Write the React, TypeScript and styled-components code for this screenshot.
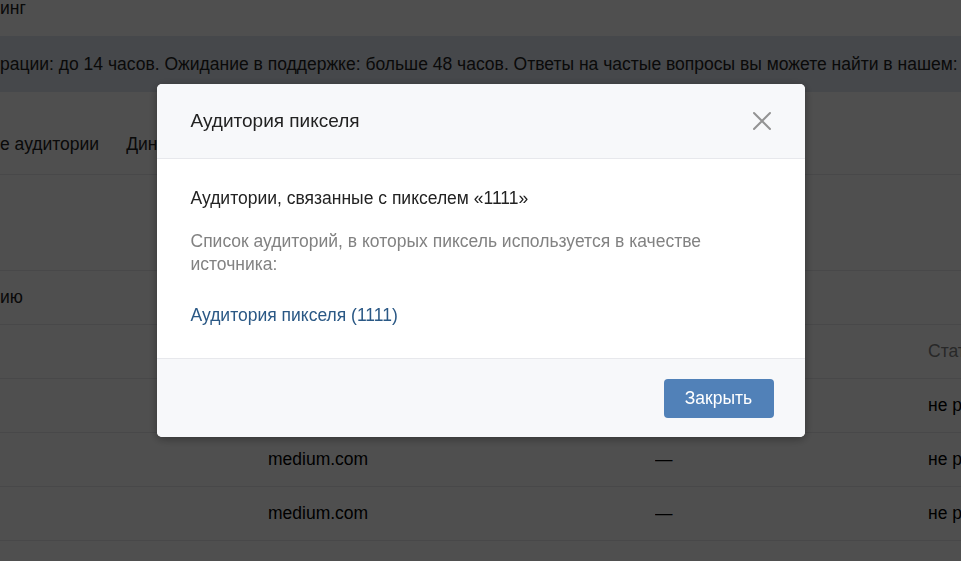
import React from "react";
import styled, { createGlobalStyle } from "styled-components";

const GlobalStyle = createGlobalStyle`
  html, body {
    margin: 0;
    padding: 0;
    background: #ffffff;
    overflow: hidden;
  }
  body {
    font-family: "Liberation Sans", Arial, sans-serif;
    color: #000000;
  }
`;

const rows = [
  { domain: "", source: "—", status: "не р" },
  { domain: "medium.com", source: "—", status: "не р" },
  { domain: "medium.com", source: "—", status: "не р" },
  { domain: "", source: "", status: "" },
];

const App: React.FC = () => {
  return (
    <>
      <GlobalStyle />
      <StyledPage>
        <StyledCrumb>инг</StyledCrumb>
        <StyledNotice>
          рации: до 14 часов. Ожидание в поддержке: больше 48 часов. Ответы на частые вопросы вы можете найти в нашем:
        </StyledNotice>
        <StyledTabs>
          <StyledTab>е аудитории</StyledTab>
          <StyledTab>Динамические аудитории</StyledTab>
        </StyledTabs>
        <StyledBlank />
        <StyledSubhead>ию</StyledSubhead>
        <StyledTable>
          <StyledRow>
            <StyledCell />
            <StyledCell />
            <StyledCell />
            <StyledCell muted>Статус</StyledCell>
          </StyledRow>
          {rows.map((r, i) => (
            <StyledRow key={i}>
              <StyledCell />
              <StyledCell>{r.domain}</StyledCell>
              <StyledCell>{r.source}</StyledCell>
              <StyledCell>{r.status}</StyledCell>
            </StyledRow>
          ))}
        </StyledTable>
      </StyledPage>

      <StyledOverlay>
        <StyledModal>
          <StyledModalHeader>
            <StyledModalTitle>Аудитория пикселя</StyledModalTitle>
            <StyledClose aria-label="Закрыть">
              <svg width="20" height="20" viewBox="0 0 20 20">
                <path
                  d="M2 2 L18 18 M18 2 L2 18"
                  stroke="#939393"
                  strokeWidth="2"
                  strokeLinecap="round"
                  fill="none"
                />
              </svg>
            </StyledClose>
          </StyledModalHeader>
          <StyledModalBody>
            <StyledLead>Аудитории, связанные с пикселем «1111»</StyledLead>
            <StyledHint>
              Список аудиторий, в которых пиксель используется в качестве
              источника:
            </StyledHint>
            <StyledLink href="#">Аудитория пикселя (1111)</StyledLink>
          </StyledModalBody>
          <StyledModalFooter>
            <StyledButton>Закрыть</StyledButton>
          </StyledModalFooter>
        </StyledModal>
      </StyledOverlay>
    </>
  );
};

const StyledPage = styled.div`
  width: 961px;
  height: 561px;
  overflow: hidden;
  display: flex;
  flex-direction: column;
  font-size: 17.5px;
  color: #000;
  & > * {
    flex-shrink: 0;
  }
`;

const StyledCrumb = styled.div`
  height: 36px;
  line-height: 16px;
  color: #222;
`;

const StyledNotice = styled.div`
  height: 56px;
  display: flex;
  align-items: center;
  background: #e2e8f0;
  color: #222;
  white-space: nowrap;
  overflow: hidden;
`;

const StyledTabs = styled.div`
  height: 83px;
  box-sizing: border-box;
  display: flex;
  align-items: flex-end;
  gap: 27px;
  padding-bottom: 19px;
  border-bottom: 1px solid #e7e8ec;
  white-space: nowrap;
  color: #222;
`;

const StyledTab = styled.div``;

const StyledBlank = styled.div`
  height: 95px;
  border-bottom: 1px solid #e7e8ec;
`;

const StyledSubhead = styled.div`
  height: 54px;
  box-sizing: border-box;
  display: flex;
  align-items: center;
  border-bottom: 1px solid #e7e8ec;
  color: #222;
`;

const StyledTable = styled.div`
  display: flex;
  flex-direction: column;
`;

const StyledRow = styled.div`
  height: 54px;
  box-sizing: border-box;
  display: grid;
  grid-template-columns: 268px 387px 273px 1fr;
  align-items: center;
  border-bottom: 1px solid #e7e8ec;
  white-space: nowrap;
`;

const StyledCell = styled.div<{ muted?: boolean }>`
  color: ${({ muted }) => (muted ? "#828282" : "#000")};
  overflow: hidden;
`;

const StyledOverlay = styled.div`
  position: fixed;
  inset: 0;
  background: rgba(0, 0, 0, 0.69);
  display: flex;
  justify-content: center;
  align-items: flex-start;
  padding-top: 84px;
`;

const StyledModal = styled.div`
  width: 648px;
  background: #fff;
  border-radius: 5px;
  overflow: hidden;
  box-shadow: 0 2px 10px rgba(0, 0, 0, 0.35);
  font-family: "Liberation Sans", Arial, sans-serif;
`;

const StyledModalHeader = styled.div`
  height: 75px;
  box-sizing: border-box;
  display: flex;
  align-items: center;
  justify-content: space-between;
  padding: 0 33px 0 34px;
  background: #f7f8fa;
  border-bottom: 1px solid #e7e8ec;
`;

const StyledModalTitle = styled.div`
  font-size: 19px;
  color: #222;
`;

const StyledClose = styled.button`
  border: 0;
  background: none;
  padding: 0;
  width: 20px;
  height: 20px;
  display: flex;
  cursor: pointer;
`;

const StyledModalBody = styled.div`
  padding: 28px 34px 31px;
  font-size: 17.5px;
  line-height: 23px;
`;

const StyledLead = styled.div`
  color: #222;
`;

const StyledHint = styled.div`
  color: #828282;
  margin-top: 20px;
  max-width: 560px;
`;

const StyledLink = styled.a`
  display: block;
  margin-top: 28px;
  color: #2a5885;
  text-decoration: none;
`;

const StyledModalFooter = styled.div`
  height: 79px;
  box-sizing: border-box;
  display: flex;
  align-items: center;
  justify-content: flex-end;
  padding: 0 31px;
  background: #f7f8fa;
  border-top: 1px solid #e7e8ec;
`;

const StyledButton = styled.button`
  width: 110px;
  height: 39px;
  border: 0;
  border-radius: 4px;
  background: #5181b8;
  color: #fff;
  font-family: "Liberation Sans", Arial, sans-serif;
  font-size: 17.5px;
  cursor: pointer;
`;

export default App;
